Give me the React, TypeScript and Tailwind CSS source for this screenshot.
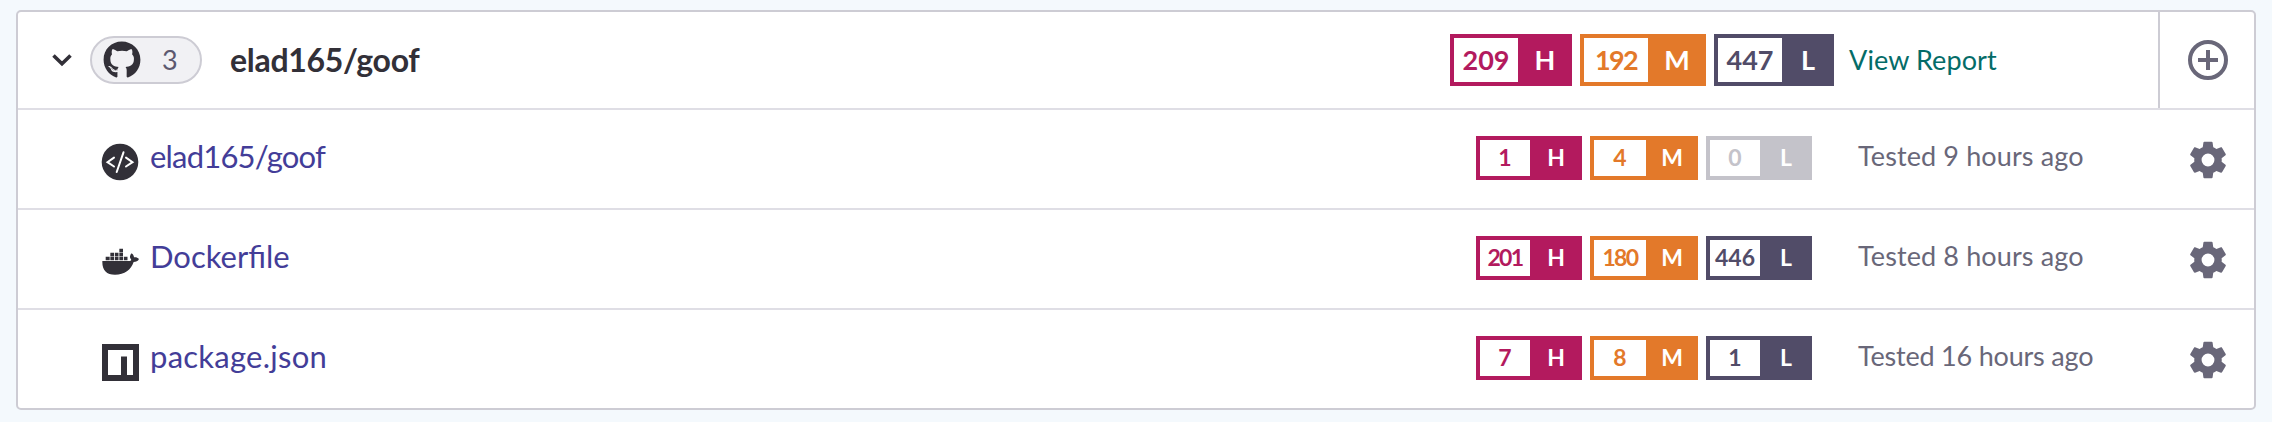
import React from "react";
import { FaGithub } from "react-icons/fa";

type Severity = "H" | "M" | "L";
type Counts = Record<Severity, number>;

const tones: Record<Severity, string> = {
  H: "border-[#b31a5e] bg-[#b31a5e] text-[#b31a5e]",
  M: "border-[#e3792a] bg-[#e3792a] text-[#e3792a]",
  L: "border-[#514c68] bg-[#514c68] text-[#514c68]",
};
const emptyTone = "border-[#c4c3ca] bg-[#c4c3ca] text-[#c4c3ca]";
const largeWidth: Record<Severity, string> = { H: "w-[122px]", M: "w-[126px]", L: "w-[120px]" };
const smallWidth: Record<Severity, string> = { H: "w-[106px]", M: "w-[108px]", L: "w-[106px]" };

function Badge({ level, count, large }: { level: Severity; count: number; large?: boolean }) {
  const tone = count === 0 ? emptyTone : tones[level];
  const box = large ? `h-[52px] text-[27px] ${largeWidth[level]}` : `h-[44px] text-[23px] ${smallWidth[level]}`;
  const inner = large ? "w-16" : level === "M" ? "w-[52px]" : "w-[50px]";
  const digits = count > 9 && String(count).includes("1") ? "tracking-[-1.6px]" : "tracking-normal";
  return (
    <div className={`flex border-4 border-r-0 font-bold leading-none ${tone} ${box}`}>
      <span className={`flex shrink-0 items-center justify-center bg-white pb-px ${inner} ${digits}`}>{count}</span>
      <span className="flex flex-1 items-center justify-center pb-px text-white">{level}</span>
    </div>
  );
}

function Badges({ counts, large }: { counts: Counts; large?: boolean }) {
  return (
    <div className="flex gap-2">
      <Badge level="H" count={counts.H} large={large} />
      <Badge level="M" count={counts.M} large={large} />
      <Badge level="L" count={counts.L} large={large} />
    </div>
  );
}

function Gear() {
  return (
    <svg viewBox="0 0 24 24" className="h-11 w-11" fill="#696779">
      <path d="M12,15.5A3.5,3.5 0 0,1 8.5,12A3.5,3.5 0 0,1 12,8.5A3.5,3.5 0 0,1 15.5,12A3.5,3.5 0 0,1 12,15.5M19.43,12.97C19.47,12.65 19.5,12.33 19.5,12C19.5,11.67 19.47,11.34 19.43,11L21.54,9.37C21.73,9.22 21.78,8.95 21.66,8.73L19.66,5.27C19.54,5.05 19.27,4.96 19.05,5.05L16.56,6.05C16.04,5.66 15.5,5.32 14.87,5.07L14.5,2.42C14.46,2.18 14.25,2 14,2H10C9.75,2 9.54,2.18 9.5,2.42L9.13,5.07C8.5,5.32 7.96,5.66 7.44,6.05L4.95,5.05C4.73,4.96 4.46,5.05 4.34,5.27L2.34,8.73C2.21,8.95 2.27,9.22 2.46,9.37L4.57,11C4.53,11.34 4.5,11.67 4.5,12C4.5,12.33 4.53,12.65 4.57,12.97L2.46,14.63C2.27,14.78 2.21,15.05 2.34,15.27L4.34,18.73C4.46,18.95 4.73,19.03 4.95,18.95L7.44,17.94C7.96,18.34 8.5,18.68 9.13,18.93L9.5,21.58C9.54,21.82 9.75,22 10,22H14C14.25,22 14.46,21.82 14.5,21.58L14.87,18.93C15.5,18.67 16.04,18.34 16.56,17.94L19.05,18.95C19.27,19.03 19.54,18.95 19.66,18.73L21.66,15.27C21.78,15.05 21.73,14.78 21.54,14.63L19.43,12.97Z" />
    </svg>
  );
}

function CodeIcon() {
  return (
    <svg viewBox="0 0 38 38" className="h-[38px] w-[38px]" fill="none">
      <circle cx="19" cy="19" r="18.3" fill="#323038" />
      <g stroke="white" strokeWidth="2" strokeLinecap="round">
        <path d="M13 14.600 6.500 19.200 13 23.500M25 14.600l6.500 4.600L25 23.500M22.500 9.300 15.700 29" />
      </g>
    </svg>
  );
}

function DockerIcon() {
  return (
    <svg viewBox="0 0 111 82" className="h-[27.3px] w-[37px]" fill="#323038">
      <path d="M52 2h11v11H52zM25 14h11v11H25zM38.500 14h11v11h-11zM52 14h11v11H52zM11 26h12v10.500H11zM25 26h11v10.500H25zM38.500 26h11v10.500h-11zM52 26h11v10.500H52zM65.500 26h11v10.500h-11z" />
      <path d="M1 39H79C86 39 89 37 87 34 82 29 83 22 89 16 94 20 96 24 96 28 102 27 107 29 111 33 108 40 102 42 95 42 87 66 68 80 39 80 13 80 0 66 1 39Z" />
    </svg>
  );
}

function NpmIcon() {
  return (
    <svg viewBox="0 0 37 37" className="h-[37px] w-[37px]">
      <path fill="#323038" fillRule="evenodd" d="M0 0h37v37H0zM6 6v25h13V12.500h6V31h6V6z" />
    </svg>
  );
}

type Project = { name: string; icon: React.ReactNode; counts: Counts; tested: string; nameClass: string; testedClass: string };

const projects: Project[] = [
  { name: "elad165/goof", icon: <CodeIcon />, counts: { H: 1, M: 4, L: 0 }, tested: "Tested 9 hours ago", nameClass: "tracking-[-0.8px]", testedClass: "tracking-[0.12px]" },
  { name: "Dockerfile", icon: <DockerIcon />, counts: { H: 201, M: 180, L: 446 }, tested: "Tested 8 hours ago", nameClass: "tracking-normal", testedClass: "tracking-[0.12px]" },
  { name: "package.json", icon: <NpmIcon />, counts: { H: 7, M: 8, L: 1 }, tested: "Tested 16 hours ago", nameClass: "tracking-[0.25px]", testedClass: "tracking-[-0.2px]" },
];

export default function App() {
  return (
    <main className="h-[422px] w-[2272px] bg-[#f4f9fd] px-4 pt-2.5 font-['Lato',sans-serif]">
      <section className="h-[400px] overflow-hidden rounded-[5px] border-2 border-[#cdccd4] bg-white">
        <header className="flex h-[98px] border-b-2 border-[#dfdee5]">
          <div className="flex w-[1432px] shrink-0 items-center pl-[34px]">
            <svg viewBox="0 0 20 14" className="h-[14px] w-5" fill="none">
              <path d="M1.500 2.500 10 10.700l8.500-8.200" stroke="#323038" strokeWidth="3.600" />
            </svg>
            <div className="ml-[18px] flex h-12 w-28 items-center rounded-full border-2 border-[#cdccd4] bg-[#f1f1f4] pl-[11px]">
              <FaGithub className="h-[38px] w-[38px]" color="#323038" />
              <span className="ml-[21px] text-[27px] text-[#5c596f]">3</span>
            </div>
            <h2 className="ml-7 pb-px text-[32px] font-bold tracking-[-0.3px] text-[#323038]">elad165/goof</h2>
          </div>
          <div className="flex w-[708px] shrink-0 items-center">
            <Badges counts={{ H: 209, M: 192, L: 447 }} large />
            <a className="ml-[15px] text-[27px] tracking-[0.1px] text-[#046c68]">View Report</a>
          </div>
          <button className="flex flex-1 items-center justify-center border-l-2 border-[#cdccd4] pl-px">
            <svg viewBox="0 0 40 40" className="h-10 w-10" fill="none" stroke="#696779" strokeWidth="4">
              <circle cx="20" cy="20" r="18" />
              <path d="M20 10v20M10 20h20" />
            </svg>
          </button>
        </header>
        {projects.map((p) => (
          <div key={p.name} className="flex h-[100px] border-b-2 border-[#dfdee5] last:border-b-0">
            <div className="flex w-[1458px] shrink-0 pl-[83px]">
              <span className="flex h-[98px] w-[38px] items-center justify-center pt-[6px]">{p.icon}</span>
              <a className={`ml-[11px] mt-[26px] text-[31px] leading-[40px] text-[#433d98] ${p.nameClass}`}>{p.name}</a>
            </div>
            <div className="w-[382px] shrink-0 pt-[26px]">
              <Badges counts={p.counts} />
            </div>
            <span className={`mt-[27px] w-[302px] shrink-0 text-[27px] leading-[38px] text-[#696779] ${p.testedClass}`}>{p.tested}</span>
            <button className="mt-[28px] ml-[26px] h-11">
              <Gear />
            </button>
          </div>
        ))}
      </section>
    </main>
  );
}
